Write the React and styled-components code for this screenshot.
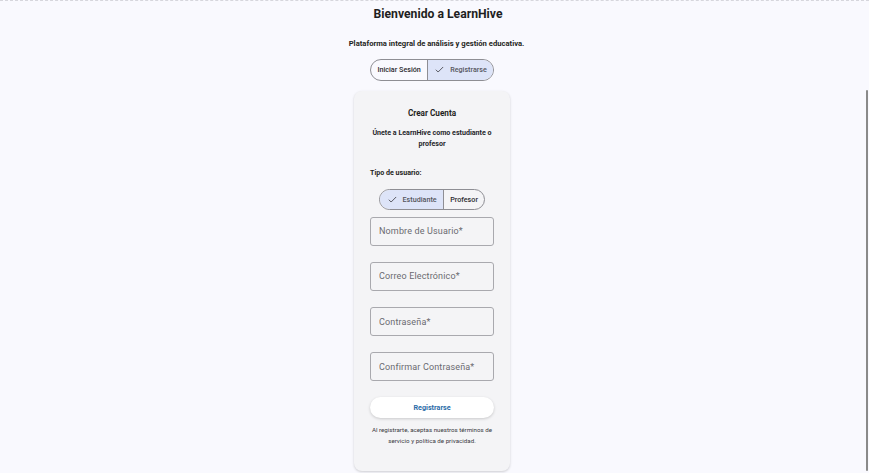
import React, { useState } from "react";
import styled, { createGlobalStyle } from "styled-components";

const GlobalStyle = createGlobalStyle`
  html, body {
    margin: 0;
    padding: 0;
    height: 100%;
    overflow: hidden;
    background: #f9f9fe;
    font-family: Roboto, "Liberation Sans", Arial, sans-serif;
  }
`;

const Page = styled.div`
  min-height: 100vh;
  box-sizing: border-box;
  border-top: 1px dashed #d6d6dc;
  display: flex;
  flex-direction: column;
  align-items: center;
  padding: 5px 5px 0 0;
`;

const Title = styled.h1`
  margin: 0 0 0 12px;
  font-size: 12.2px;
  line-height: 16px;
  font-weight: 700;
  color: #1f1f22;
`;

const Subtitle = styled.p`
  margin: 16.5px 0 0 9px;
  font-size: 7.65px;
  line-height: 10px;
  font-weight: 700;
  color: #1f1f22;
`;

const ToggleGroup = styled.div`
  display: flex;
  margin-top: ${(p) => p.$mt || 0}px;
  height: ${(p) => p.$h}px;
  border: 1px solid #8e8e94;
  border-radius: 999px;
  overflow: hidden;
  box-sizing: border-box;
  align-self: center;
`;

const ToggleButton = styled.button`
  display: flex;
  align-items: center;
  gap: 5px;
  border: none;
  border-left: ${(p) => (p.$first ? "none" : "1px solid #8e8e94")};
  background: ${(p) => (p.$selected ? "#dde4f8" : "transparent")};
  color: ${(p) => (p.$selected ? "#55565e" : "#2a2a2e")};
  font-family: inherit;
  font-size: 7.2px;
  font-weight: 500;
  padding: 0 ${(p) => p.$px}px;
  cursor: pointer;
`;

const Card = styled.div`
  margin-top: 10px;
  width: 156px;
  box-sizing: border-box;
  padding: 16px 16px 24px;
  background: #f4f4f6;
  border-radius: 8px;
  box-shadow: 0 1px 3px rgba(0, 0, 0, 0.12), 0 1px 2px rgba(0, 0, 0, 0.06);
  display: flex;
  flex-direction: column;
`;

const CardTitle = styled.h2`
  margin: 0;
  text-align: center;
  font-size: 8.2px;
  line-height: 12px;
  font-weight: 700;
  color: #1f1f22;
`;

const CardText = styled.p`
  margin: 8.5px -4px 0;
  text-align: center;
  white-space: nowrap;
  font-size: 7.1px;
  line-height: 11px;
  font-weight: 700;
  color: #26262a;
`;

const Label = styled.p`
  margin: 18.5px 0 0;
  font-size: 7.1px;
  line-height: 10px;
  font-weight: 700;
  color: #1f1f22;
`;

const Fields = styled.div`
  margin-top: 7px;
  display: flex;
  flex-direction: column;
  gap: 16.3px;
`;

const Input = styled.input`
  height: 29px;
  box-sizing: border-box;
  border: 1px solid #a9a9ae;
  border-radius: 3px;
  background: transparent;
  padding: 0 8px;
  font-family: inherit;
  font-size: 9px;
  letter-spacing: 0.15px;
  color: #333;
  outline: none;

  &::placeholder {
    color: #6a6a70;
  }
`;

const SubmitButton = styled.button`
  margin-top: 16px;
  height: 21px;
  border: none;
  border-radius: 999px;
  background: #fff;
  box-shadow: 0 1px 3px rgba(0, 0, 0, 0.18);
  color: #2b6ca8;
  font-family: inherit;
  font-size: 7.2px;
  font-weight: 700;
  cursor: pointer;
`;

const Terms = styled.p`
  margin: 6.5px -4px 0;
  text-align: center;
  white-space: nowrap;
  font-size: 6.2px;
  line-height: 11px;
  color: #3a3a3e;
`;

const ScrollThumb = styled.div`
  position: fixed;
  right: 1px;
  top: 90px;
  bottom: 2px;
  width: 2px;
  border-radius: 1px;
  background: #8a8a8a;
`;

function Check() {
  return (
    <svg width="11" height="11" viewBox="0 0 24 24" fill="none">
      <path d="M4 12.5l5 5L20 6.5" stroke="#3c3c42" strokeWidth="1.8" />
    </svg>
  );
}

export default function App() {
  const [mode, setMode] = useState("register");
  const [role, setRole] = useState("student");

  return (
    <>
      <GlobalStyle />
      <Page>
        <Title>Bienvenido a LearnHive</Title>
        <Subtitle>Plataforma integral de análisis y gestión educativa.</Subtitle>
        <ToggleGroup $mt={10} $h={22}>
          <ToggleButton $first $px={6.3} $selected={mode === "login"} onClick={() => setMode("login")}>
            {mode === "login" && <Check />}
            Iniciar Sesión
          </ToggleButton>
          <ToggleButton $px={6} $selected={mode === "register"} onClick={() => setMode("register")}>
            {mode === "register" && <Check />}
            Registrarse
          </ToggleButton>
        </ToggleGroup>

        <Card>
          <CardTitle>Crear Cuenta</CardTitle>
          <CardText>
            Únete a LearnHive como estudiante o
            <br />
            profesor
          </CardText>
          <Label>Tipo de usuario:</Label>
          <ToggleGroup $mt={11} $h={21}>
            <ToggleButton $first $px={6.5} $selected={role === "student"} onClick={() => setRole("student")}>
              {role === "student" && <Check />}
              Estudiante
            </ToggleButton>
            <ToggleButton $px={6} $selected={role === "teacher"} onClick={() => setRole("teacher")}>
              {role === "teacher" && <Check />}
              Profesor
            </ToggleButton>
          </ToggleGroup>
          <Fields>
            <Input placeholder="Nombre de Usuario*" />
            <Input placeholder="Correo Electrónico*" />
            <Input type="password" placeholder="Contraseña*" />
            <Input type="password" placeholder="Confirmar Contraseña*" />
          </Fields>
          <SubmitButton>Registrarse</SubmitButton>
          <Terms>
            Al registrarte, aceptas nuestros términos de
            <br />
            servicio y política de privacidad.
          </Terms>
        </Card>
      </Page>
      <ScrollThumb />
    </>
  );
}
